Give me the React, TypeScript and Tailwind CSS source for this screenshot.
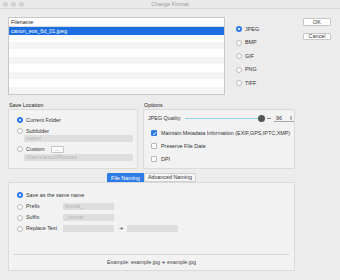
import React from "react";

const Radio = ({ checked = false }: { checked?: boolean }) => (
    <span
        className={
            checked
                ? "w-[6px] h-[6px] rounded-full bg-[#2f7be8] flex items-center justify-center shrink-0"
                : "w-[6px] h-[6px] rounded-full bg-white border-[0.5px] border-[#b9b9b9] shrink-0"
        }
    >
        {checked && <span className="w-[2px] h-[2px] rounded-full bg-white" />}
    </span>
);

const Check = ({ checked = false }: { checked?: boolean }) => (
    <span
        className={
            checked
                ? "w-[6px] h-[6px] rounded-[1px] bg-[#2f7be8] flex items-center justify-center shrink-0"
                : "w-[6px] h-[6px] rounded-[1px] bg-white border-[0.5px] border-[#b9b9b9] shrink-0"
        }
    >
        {checked && (
            <svg viewBox="0 0 10 10" className="w-[5px] h-[5px]">
                <path d="M2 5.5 L4.2 7.5 L8 2.5" fill="none" stroke="white" strokeWidth="1.6" />
            </svg>
        )}
    </span>
);

const Field = ({ text = "", w }: { text?: string; w: string }) => (
    <div className={`${w} h-[7px] bg-[#dedede] text-[#b3b3b3] pl-[2px] leading-[7px]`}>{text}</div>
);

const App = () => {
    // filas de la lista
    const rows = [0, 1, 2, 3, 4, 5, 6, 7];

    return (
        <div
            className="w-[340px] h-[280px] bg-[#ececec] flex flex-col text-[5.4px] text-[#333] overflow-hidden"
            style={{ fontFamily: '"Liberation Sans", Arial, sans-serif' }}
        >
            {/* barra de titulo */}
            <div className="h-[9px] flex items-center relative bg-[#e9e9e9] border-b-[0.5px] border-[#d6d6d6]">
                <div className="flex gap-[3px] pl-[3px]">
                    <span className="w-[5px] h-[5px] rounded-full bg-[#d0d0d0]" />
                    <span className="w-[5px] h-[5px] rounded-full bg-[#d0d0d0]" />
                    <span className="w-[5px] h-[5px] rounded-full bg-[#d0d0d0]" />
                </div>
                <div className="absolute inset-0 flex items-center justify-center text-[#9a9a9a]">Change Format</div>
            </div>

            {/* lista y formatos */}
            <div className="flex pl-[8px] pt-[8px]">
                <div className="w-[217px] h-[78px] bg-white border-[0.5px] border-[#c8c8c8] flex flex-col">
                    <div className="h-[9px] flex items-center pl-[2px] text-[#222] border-b-[0.5px] border-[#dcdcdc]">Filename</div>
                    <div className="h-[7.5px] bg-[#1d6ee0] text-white flex items-center pl-[2px]">canon_eos_6d_01.jpeg</div>
                    {rows.map((r) => (
                        <div key={r} className={r % 2 === 0 ? "h-[7.5px] bg-white" : "h-[7.5px] bg-[#f4f4f4]"} />
                    ))}
                </div>
                <div className="flex flex-col pl-[11px] pt-[9px] gap-[7.5px] w-[78px]">
                    {["JPEG", "BMP", "GIF", "PNG", "TIFF"].map((f, i) => (
                        <div key={f} className="flex items-center gap-[3px] h-[6px]">
                            <Radio checked={i === 0} />
                            <span>{f}</span>
                        </div>
                    ))}
                </div>
                <div className="flex flex-col gap-[7px] pt-[1px]">
                    <div className="w-[28px] h-[7.5px] bg-white border-[0.5px] border-[#c6c6c6] rounded-[1px] flex items-center justify-center">OK</div>
                    <div className="w-[28px] h-[7.5px] bg-white border-[0.5px] border-[#c6c6c6] rounded-[1px] flex items-center justify-center">Cancel</div>
                </div>
            </div>

            {/* ubicacion y opciones */}
            <div className="flex pl-[8px] pt-[6px] gap-[5px]">
                <div className="flex flex-col w-[130px]">
                    <div className="h-[8px] pl-[1px] flex items-center text-[#222]">Save Location</div>
                    <div className="h-[60px] bg-[#f2f2f2] border-[0.5px] border-[#dadada] rounded-[1px] pl-[8px] pt-[7px] flex flex-col">
                        <div className="flex items-center gap-[3px] h-[6px]">
                            <Radio checked />
                            <span>Current Folder</span>
                        </div>
                        <div className="flex items-center gap-[3px] h-[6px] mt-[5px]">
                            <Radio />
                            <span>Subfolder</span>
                        </div>
                        <div className="pl-[7px] mt-[1px]">
                            <Field text="output" w="w-[109px]" />
                        </div>
                        <div className="flex items-center gap-[3px] h-[8px] mt-[3px]">
                            <Radio />
                            <span>Custom</span>
                            <span className="w-[13px] h-[7px] bg-white border-[0.5px] border-[#c6c6c6] rounded-[1px] flex items-center justify-center ml-[3px]">...</span>
                        </div>
                        <div className="pl-[7px] mt-[1px]">
                            <Field text="/Users/anovi/Pictures" w="w-[109px]" />
                        </div>
                    </div>
                </div>
                <div className="flex flex-col w-[152px]">
                    <div className="h-[8px] pl-[1px] flex items-center text-[#222]">Options</div>
                    <div className="h-[60px] bg-[#f2f2f2] border-[0.5px] border-[#dadada] rounded-[1px] pl-[4px] pt-[5px] flex flex-col">
                        <div className="flex items-center h-[7px]">
                            <span className="w-[37px]">JPEG Quality</span>
                            <div className="w-[80px] h-[7px] flex items-center relative">
                                <div className="w-full h-[1px] bg-[#8fd3ea]" />
                                <span className="absolute left-[73px] w-[7px] h-[7px] rounded-full bg-[#555]" />
                            </div>
                            <span className="w-[4px] h-[0.5px] bg-[#888] ml-[2px]" />
                            <div className="flex items-center ml-[3px] w-[20px] border-b-[0.5px] border-[#aaa] h-[7px]">
                                <span className="pl-[2px]">96</span>
                                <svg viewBox="0 0 4 8" className="ml-auto mr-[2px] w-[2px] h-[4px]">
                                    <path d="M0 3 L2 0 L4 3 Z M0 5 L2 8 L4 5 Z" fill="#555" />
                                </svg>
                            </div>
                        </div>
                        <div className="flex items-center gap-[4px] h-[6px] mt-[8px] pl-[3px]">
                            <Check checked />
                            <span>Maintain Metadata Information (EXIF,GPS,IPTC,XMP)</span>
                        </div>
                        <div className="flex items-center gap-[4px] h-[6px] mt-[7px] pl-[3px]">
                            <Check />
                            <span>Preserve File Date</span>
                        </div>
                        <div className="flex items-center gap-[4px] h-[6px] mt-[7px] pl-[3px]">
                            <Check />
                            <span>DPI</span>
                        </div>
                    </div>
                </div>
            </div>

            {/* pestañas */}
            <div className="flex pl-[107px] pt-[4px]">
                <div className="w-[37px] h-[10px] bg-[#2f7be8] text-white flex items-center justify-center rounded-l-[1px]">File Naming</div>
                <div className="w-[52px] h-[9px] bg-[#f6f6f6] border-[0.5px] border-[#cfcfcf] flex items-center justify-center rounded-r-[1px]">Advanced Naming</div>
            </div>

            {/* nombres */}
            <div className="ml-[8px] w-[287px] h-[89px] bg-[#f2f2f2] border-[0.5px] border-[#dadada] -mt-[1px] flex flex-col">
                <div className="pl-[8px] pt-[9px] flex flex-col">
                    <div className="flex items-center gap-[3px] h-[6px]">
                        <Radio checked />
                        <span>Save as the same name</span>
                    </div>
                    <div className="flex items-center h-[7px] mt-[5px]">
                        <Radio />
                        <span className="w-[40px] pl-[3px]">Prefix</span>
                        <Field text="format_" w="w-[51px]" />
                    </div>
                    <div className="flex items-center h-[7px] mt-[4px]">
                        <Radio />
                        <span className="w-[40px] pl-[3px]">Suffix</span>
                        <Field text="_format" w="w-[51px]" />
                    </div>
                    <div className="flex items-center h-[7px] mt-[4px]">
                        <Radio />
                        <span className="w-[40px] pl-[3px]">Replace Text</span>
                        <Field w="w-[51px]" />
                        <span className="w-[13px] text-center text-[#444]">➔</span>
                        <Field w="w-[51px]" />
                    </div>
                </div>
                <div className="mt-auto mx-[5px] border-t-[0.5px] border-[#d2d2d2] h-[16px] flex items-center justify-center text-[#444]">
                    Example: example.jpg ➔ example.jpg
                </div>
            </div>
        </div>
    );
};

export default App;
